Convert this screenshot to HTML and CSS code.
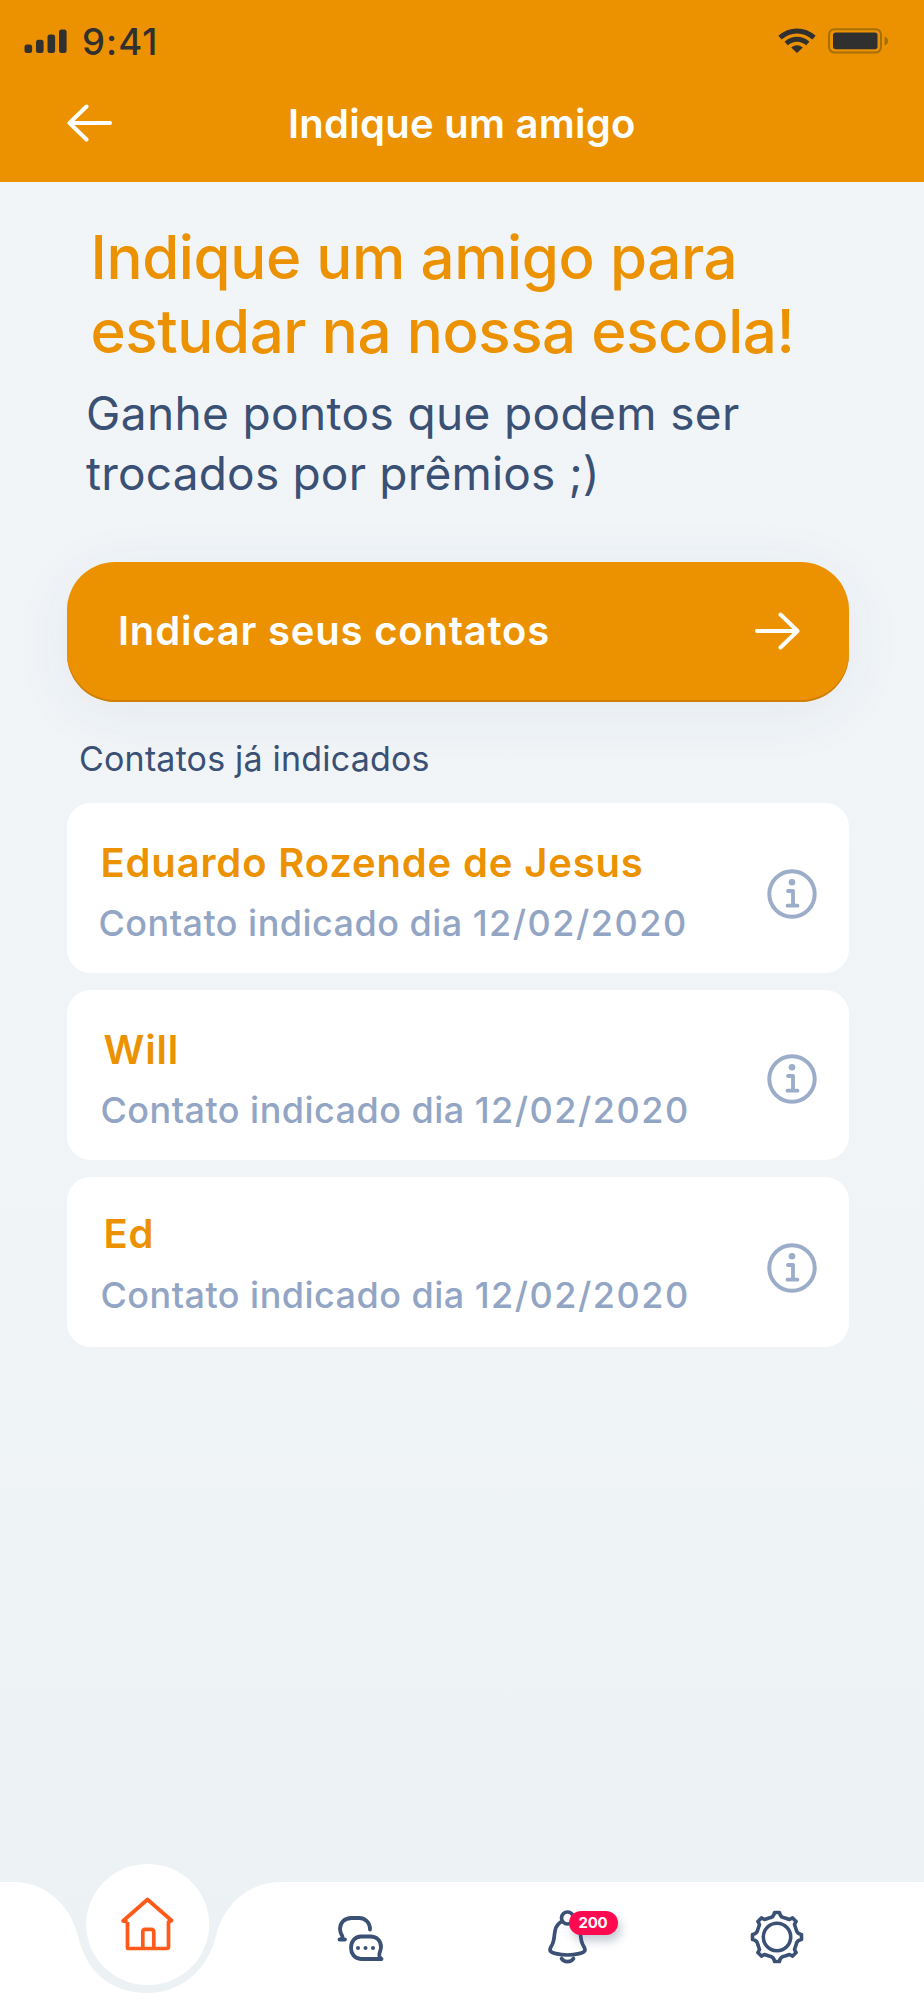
FILE: index.html
```html
<!DOCTYPE html>
<html lang="pt-BR">
<head>
<meta charset="utf-8">
<title>Indique um amigo</title>
<link rel="stylesheet" href="styles.css">
</head>
<body>
<svg class="defs" width="0" height="0" aria-hidden="true">
  <symbol id="info" viewBox="0 0 50 50">
    <circle cx="25" cy="25" r="22.7" fill="none" stroke="currentColor" stroke-width="4"/>
    <circle cx="25" cy="13.3" r="3.3" fill="currentColor"/>
    <path d="M21 22h5v14.7M20.500 36.700h10" fill="none" stroke="currentColor" stroke-width="3.800" stroke-linecap="round" stroke-linejoin="round"/>
  </symbol>
</svg>
<div class="screen">
  <header class="top">
    <div class="status">
      <svg class="signal" width="44" height="26" viewBox="0 0 44 26"><rect x="0.500" y="15.500" width="7.600" height="8.500" rx="2.500"/><rect x="12" y="10.700" width="7.600" height="13.300" rx="2.500"/><rect x="23.500" y="5.500" width="7.600" height="18.500" rx="2.500"/><rect x="35" y="0.500" width="7.600" height="23.500" rx="2.500"/></svg>
      <span class="time">9:41</span>
      <svg class="wifi" width="38" height="26" viewBox="0 0 38 26"><path d="M2 9.700C12 0.700 26 0.700 36 9.700" fill="none" stroke="#303030" stroke-width="5"/><path d="M8.200 15.500C14.500 9.800 23.500 9.800 29.800 15.500" fill="none" stroke="#303030" stroke-width="5"/><path d="M13.200 19.500Q19 15 24.800 19.500L19 25Z" fill="#303030"/></svg>
      <svg class="battery" width="61" height="26" viewBox="0 0 61 26"><rect x="1" y="1.200" width="52" height="23.400" rx="5.500" fill="none" stroke="#a57008" stroke-width="2"/><rect x="5" y="4.500" width="44.500" height="16.800" rx="2.800" fill="#303030"/><path d="M56.500 8.500Q60.200 10 60.200 13T56.500 17.500Z" fill="#a57008"/></svg>
    </div>
    <div class="bar">
      <svg class="back" width="46" height="38" viewBox="0 0 46 38"><path d="M43 19H2.500M19.500 2.500L2.500 19L19.500 35.500" fill="none" stroke="#fff" stroke-width="4" stroke-linecap="round" stroke-linejoin="round"/></svg>
      <span class="title">Indique um amigo</span>
    </div>
  </header>
  <main class="content">
    <h1 class="heading">Indique um amigo para<br>estudar na nossa escola!</h1>
    <p class="lead">Ganhe pontos que podem ser<br><span class="lead-end">trocados por prêmios ;)</span></p>
    <button class="cta"><span class="cta-text">Indicar seus contatos</span>
      <svg width="46" height="38" viewBox="0 0 46 38"><path d="M3 19H43.500M26.500 2.500L43.500 19L26.500 35.500" fill="none" stroke="#fff" stroke-width="4" stroke-linecap="round" stroke-linejoin="round"/></svg>
    </button>
    <h2 class="label">Contatos já indicados</h2>
    <ul class="cards">
      <li class="card first"><div class="who"><div class="name">Eduardo Rozende de Jesus</div><div class="when">Contato indicado dia <span class="date">12/02/2020</span></div></div><svg class="info" width="50" height="50"><use href="#info"/></svg></li>
      <li class="card second"><div class="who"><div class="name">Will</div><div class="when">Contato indicado dia <span class="date">12/02/2020</span></div></div><svg class="info" width="50" height="50"><use href="#info"/></svg></li>
      <li class="card third"><div class="who"><div class="name">Ed</div><div class="when">Contato indicado dia <span class="date">12/02/2020</span></div></div><svg class="info" width="50" height="50"><use href="#info"/></svg></li>
    </ul>
  </main>
  <nav class="tabs">
    <svg class="tabs-shape" width="924" height="136" viewBox="0 0 924 136"><path d="M0 18H14C42 18 69 37 78 72C88 116 119 129 148 129C179 129 207 108 216 72C225 36 252 18 282 18H924V136H0Z" fill="#fff"/><ellipse cx="147.700" cy="60.500" rx="61.500" ry="60.500" fill="#fff"/></svg>
    <a class="tab home"><svg width="56" height="56" viewBox="0 0 56 56"><path d="M7.500 25V50.500Q7.500 51.500 8.500 51.500H46.500Q48.500 51.500 48.500 49.500V25L51.500 23.500L27.500 2.500L3 24L7.500 25M22.800 51V35Q22.800 32.300 25 32.300H31Q33.800 32.300 33.800 35V51" fill="none" stroke="#ff5a19" stroke-width="3.700" stroke-linejoin="round"/></svg></a>
    <a class="tab chat"><svg width="48" height="48" viewBox="0 0 48 48"><g fill="none" stroke="#3a5074" stroke-width="3.800" stroke-linecap="round" stroke-linejoin="round"><path d="M33 14.500C33 7 27.500 3 22 3H14.500C7.500 3 3 7.500 3 14C3 17.500 4.500 19.500 5.500 21.500L4.500 24.500H2.500H8"/><path d="M44.500 44H24C17.500 44 14 38.500 14 33C14 26.500 18 21.500 24 21.500H33.500C40 21.500 44 26 44 32C44 36 42 37 42.300 40.500Q42.700 43 44.500 44Z"/></g><g fill="#3a5074"><circle cx="21" cy="33" r="2"/><circle cx="28.500" cy="33" r="2"/><circle cx="36" cy="33" r="2"/></g></svg></a>
    <a class="tab bell"><svg width="40" height="54" viewBox="0 0 40 54"><g fill="none" stroke="#3a5074" stroke-width="3.700" stroke-linecap="round"><circle cx="19.500" cy="8" r="6"/><path d="M13.500 11.500C4 17 8 27 4.500 34C3 37 2 38 2 40C2 43 12 45 19.500 45S37 43 37 40C37 38 36 37 34.500 34C31 27 35 17 25.500 11.500M13.500 48.500Q15.500 51.700 19.500 51.700T25.500 48.500"/></g></svg><span class="badge">200</span></a>
    <a class="tab gear"><svg width="54" height="54" viewBox="-27 -27 54 54"><g fill="none" stroke="#3a5074" stroke-width="3.600" stroke-linejoin="round"><circle r="13.700"/><path d="M-2.500-24.500H2.500Q3-19.800 8-19L12.500-17.500L15.600-19.100L19.100-15.600L17.500-12.500L19-8Q19.800-3 24.500-2.500V2.500Q19.800 3 19 8L17.500 12.500L19.100 15.600L15.600 19.100L12.500 17.500L8 19Q3 19.800 2.500 24.500H-2.500Q-3 19.800-8 19L-12.500 17.500L-15.600 19.100L-19.100 15.600L-17.500 12.500L-19 8Q-19.800 3-24.500 2.500V-2.500Q-19.800-3-19-8L-17.500-12.500L-19.100-15.600L-15.600-19.100L-12.500-17.500L-8-19Q-3-19.800-2.500-24.500Z"/></g></svg></a>
  </nav>
</div>
</body>
</html>
```
FILE: styles.css
```css
* { box-sizing: border-box; }
body { margin: 0; font-family: Inter, sans-serif; }
.defs { position: absolute; }
.screen { width: 924px; height: 2000px; display: flex; flex-direction: column; overflow: hidden; background: linear-gradient(#f1f5f8, #f0f4f7 65%, #ecf1f4); }
h1, h2, p, ul { margin: 0; padding: 0; font-weight: 400; }
.top { height: 182px; background: #ec9200; }
.status { height: 84px; padding: 0 35px 0 24px; display: flex; color: #303030; }
.signal { margin-top: 29px; fill: #303030; }
.time { margin: 20px 0 0 14px; font-size: 36.5px; line-height: 44px; font-weight: 500; letter-spacing: 1.1px; }
.wifi { margin: 28px 12px 0 auto; }
.battery { margin-top: 28px; }
.bar { height: 78px; display: flex; align-items: center; padding-left: 67px; color: #fff; }
.title { margin: 1px 0 0 175px; font-size: 40px; line-height: 48px; font-weight: 600; letter-spacing: .25px; white-space: nowrap; }
.content { flex: 1; padding: 38px 75px 0 67px; }
.heading { padding-left: 23.5px; font-size: 60px; line-height: 74px; font-weight: 500; letter-spacing: -.4px; color: #ec9200; white-space: nowrap; }
.lead { margin-top: 16px; padding-left: 19px; font-size: 46px; line-height: 59.5px; letter-spacing: .37px; color: #3a5074; white-space: nowrap; }
.lead-end { letter-spacing: .2px; }
.cta { margin-top: 58.5px; width: 782px; height: 140.5px; padding: 0 49px 2px 51px; display: flex; align-items: center; justify-content: space-between; border: 0; border-radius: 48px; background: #ec9200; box-shadow: inset 0 -2px 0 #cf7f06, 0 10px 64px rgba(58, 60, 110, .06); color: #fff; font: 600 40px/48px Inter, sans-serif; letter-spacing: .8px; }
.label { margin: 36px 0 0 12px; font-size: 34px; line-height: 42px; letter-spacing: .19px; color: #3a5074; }
.cards { margin-top: 23px; display: flex; flex-direction: column; gap: 17px; list-style: none; }
.card { height: 170px; border-radius: 24px; background: #fff; display: flex; justify-content: space-between; padding: 35px 32px 0 31.5px; white-space: nowrap; }
.name { padding-left: 2px; font-size: 40px; line-height: 50px; font-weight: 600; letter-spacing: .84px; color: #ec9200; }
.when { margin-top: 13px; font-size: 36px; line-height: 44px; font-weight: 500; letter-spacing: .46px; color: #92a5c4; }
.date { letter-spacing: 1.5px; }
.second .who, .third .who { padding-left: 2px; }
.second .name, .third .name { padding-left: 3px; }
.third .who { margin-top: -3px; }
.third .when { margin-top: 14px; }
.info { margin-top: 31px; color: #9badc9; }
.second .info { margin-top: 29px; }
.tabs { height: 136px; position: relative; display: flex; }
.tabs-shape { position: absolute; left: 0; top: 0; }
.tab { position: relative; display: block; }
.tab svg { display: block; }
.home { margin: 33px 0 0 119.500px; }
.chat { margin: 51px 0 0 161px; }
.bell { margin: 46px 0 0 163px; }
.gear { margin: 46px 0 0 162px; }
.badge { position: absolute; left: 21px; top: 1px; width: 49px; height: 24px; border-radius: 12px; background: #ff0a50; box-shadow: 3px 6px 10px rgba(58, 80, 116, .3); color: #fff; font-size: 15px; line-height: 24px; font-weight: 700; letter-spacing: -.2px; text-align: center; }
```
